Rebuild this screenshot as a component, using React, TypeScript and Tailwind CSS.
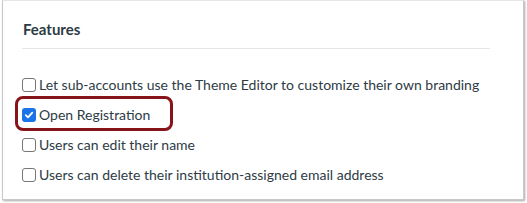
import React from "react";

function Box({ checked }: { checked?: boolean }) {
  if (checked) {
    return (
      <span className="w-[14px] h-[14px] rounded-[3px] bg-[#1a73e8] flex items-center justify-center shrink-0">
        <svg width="10" height="10" viewBox="0 0 10 10">
          <path d="M1.8 5.2 L4 7.4 L8.3 2.6" fill="none" stroke="white" strokeWidth="1.8" strokeLinecap="round" strokeLinejoin="round" />
        </svg>
      </span>
    );
  }
  return <span className="w-[14px] h-[14px] rounded-[3px] border border-[#767676] bg-white shrink-0" />;
}

function Row({ label, checked }: { label: string; checked?: boolean }) {
  return (
    <div className="flex items-center gap-[3px] h-[30px] whitespace-nowrap">
      <Box checked={checked} />
      <span>{label}</span>
    </div>
  );
}

export default function App() {
  return (
    <div className="w-[527px] h-[203px] bg-white pl-[2px] pt-0" style={{ fontFamily: "Lato, 'Noto Sans', sans-serif" }}>
      <div className="w-[522px] h-[200px] border border-[#c8c8c8] border-t-[#e6e6e6] shadow-[1px_1px_2px_rgba(0,0,0,0.35)] bg-white pl-[19px] pr-[33px] pt-[18px] text-[#2d3b45]">
        <div className="text-[15px] font-bold leading-[20px] pb-[9px] border-b border-[#e5e5e5] pl-[1px]">Features</div>
        <div className="pt-[21px] text-[14px] leading-[20px]">
          <Row label="Let sub-accounts use the Theme Editor to customize their own branding" />
          <div className="relative">
            <Row label="Open Registration" checked />
            <div className="absolute left-[-7px] top-[-4px] w-[158px] h-[35px] border-[3px] border-[#861419] rounded-[8px]" />
          </div>
          <Row label="Users can edit their name" />
          <Row label="Users can delete their institution-assigned email address" />
        </div>
      </div>
    </div>
  );
}
